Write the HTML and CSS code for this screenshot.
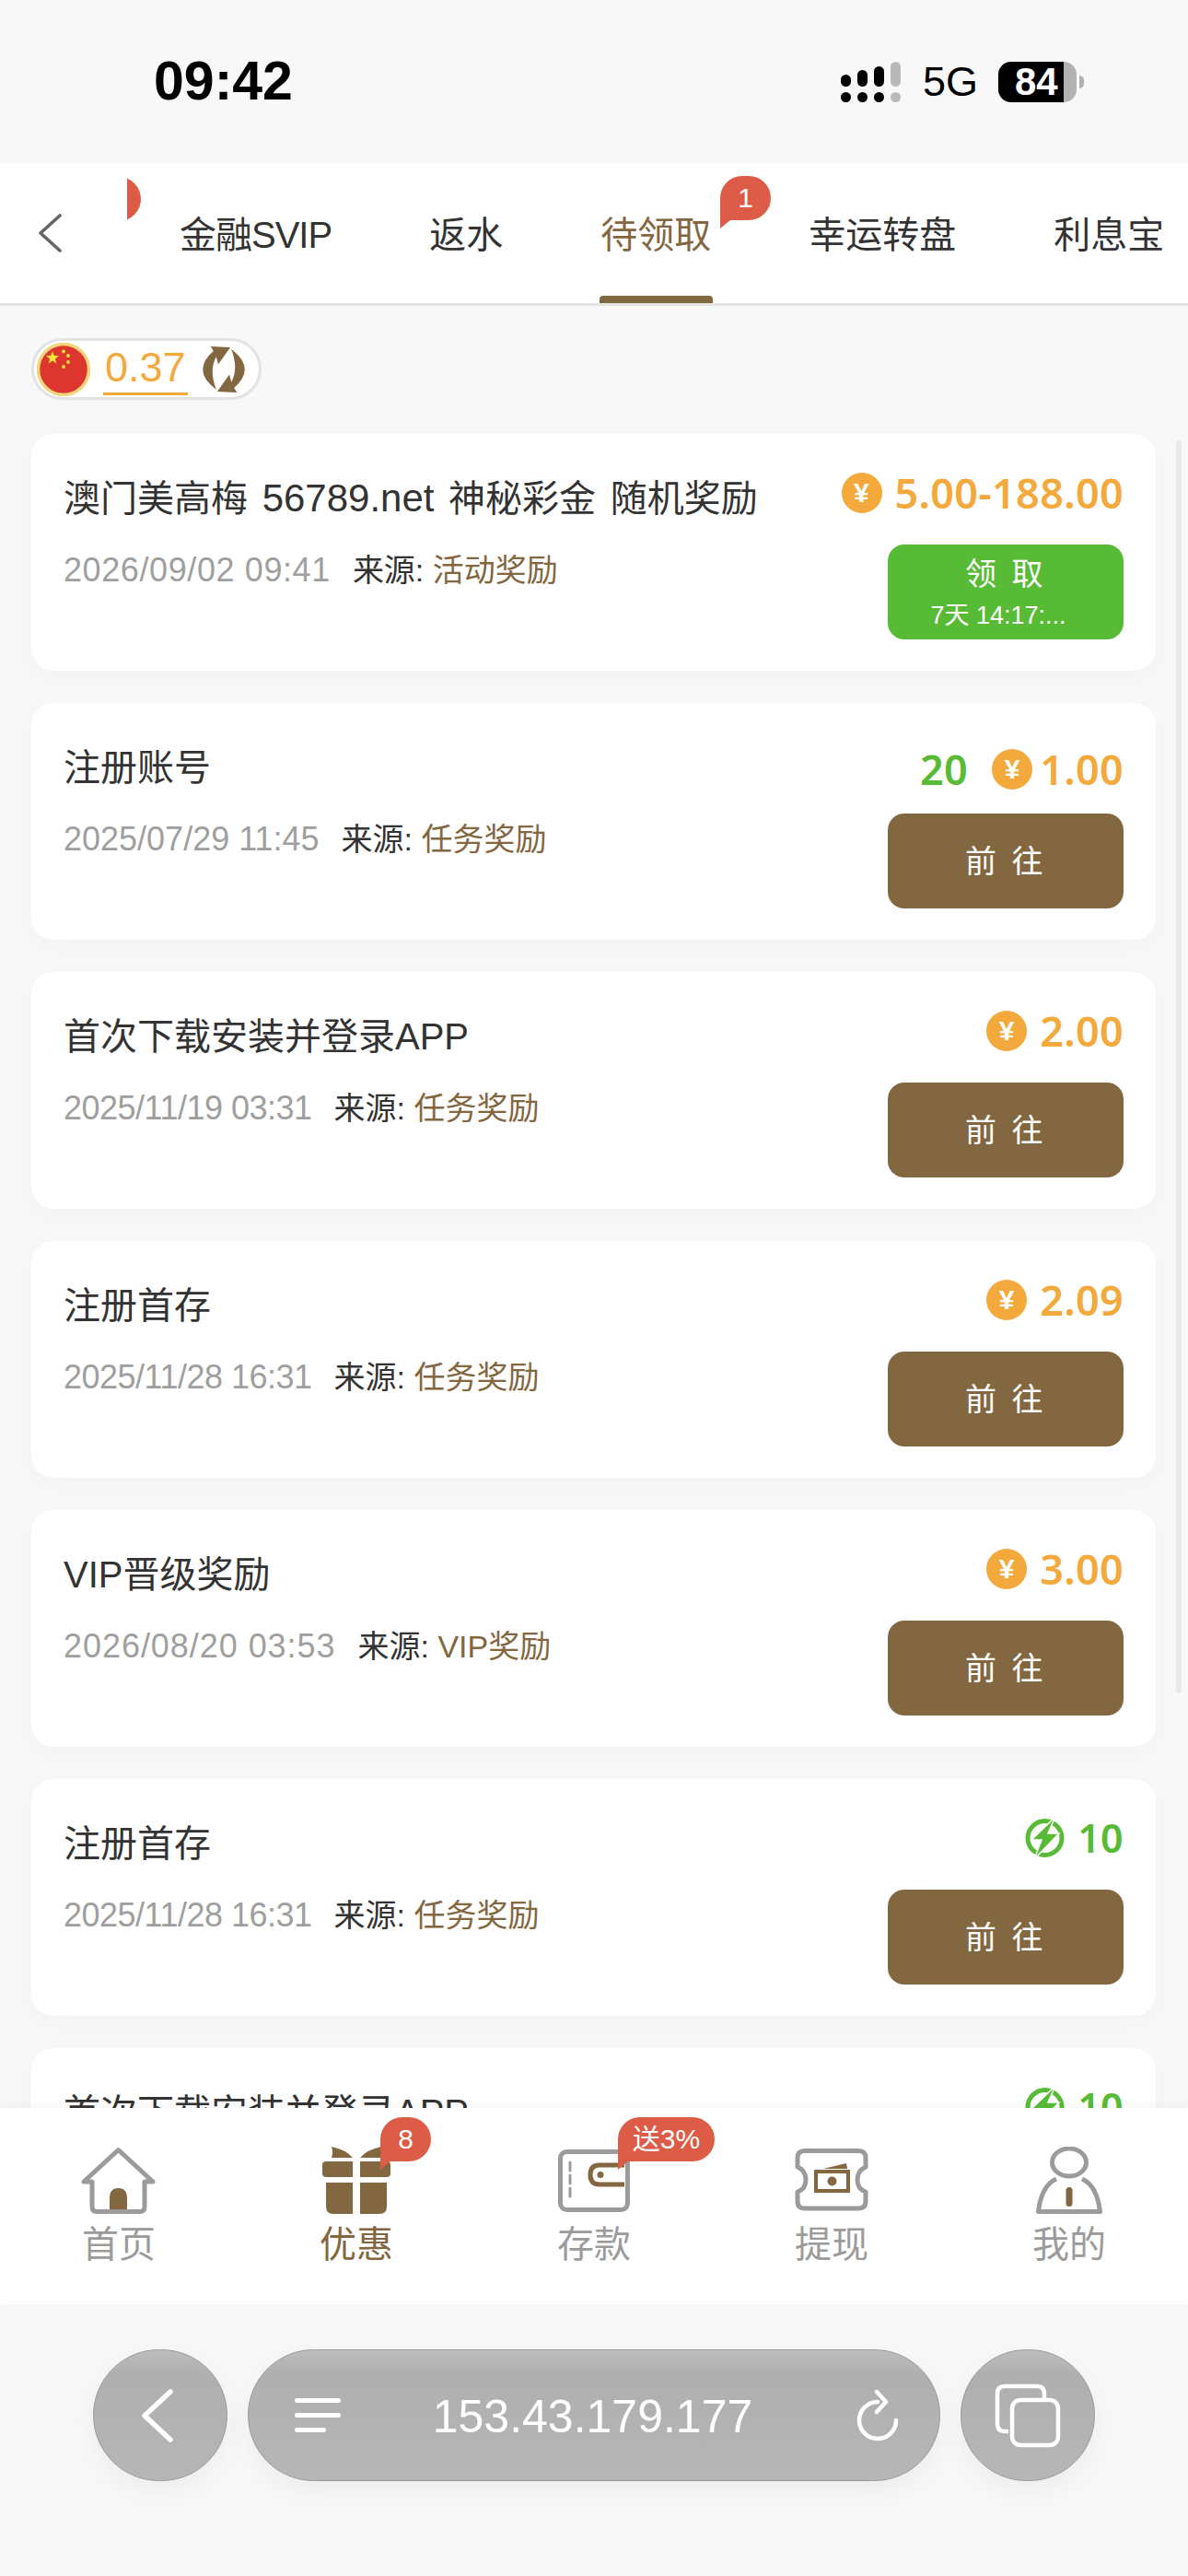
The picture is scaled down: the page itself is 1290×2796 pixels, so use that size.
FILE: index.html
```html
<!DOCTYPE html>
<html lang="zh-CN">
<head>
  <meta charset="UTF-8">
  <meta name="viewport" content="width=device-width, initial-scale=1.0">
  <title>待领取</title>
  <link rel="stylesheet" href="styles.css">
</head>
<body>
  <div class="status-bar">
    <span class="time">09:42</span>
    <div class="status-right">
      <svg class="signal" width="65" height="44" viewBox="0 0 65 44">
        <g fill="#000">
          <rect x="0" y="14" width="11" height="13" rx="5.5"/><rect x="18" y="9" width="11" height="18" rx="5.5"/><rect x="36" y="5" width="11" height="22" rx="5.5"/>
          <rect x="0" y="33" width="11" height="11" rx="5.5"/><rect x="18" y="33" width="11" height="11" rx="5.5"/><rect x="36" y="33" width="11" height="11" rx="5.5"/>
        </g>
        <g fill="#b9b9b9"><rect x="54" y="0" width="11" height="27" rx="5.5"/><rect x="54" y="33" width="11" height="11" rx="5.5"/></g>
      </svg>
      <span class="net">5G</span>
      <div class="battery"><span>84</span></div>
      <i class="battery-nub"></i>
    </div>
  </div>

  <nav class="top-nav">
    <a class="nav-back">
      <svg width="28" height="44" viewBox="0 0 28 44"><path d="M25 3 L4 22 L25 41" fill="none" stroke="#666" stroke-width="3.6" stroke-linejoin="round" stroke-linecap="round"/></svg>
    </a>
    <div class="tabs">
      <div class="tab-cut"><b class="badge"></b></div>
      <a class="tab tab-first">金融SVIP</a>
      <a class="tab">返水</a>
      <a class="tab active">待领取<b class="badge tab-badge">1</b></a>
      <a class="tab">幸运转盘</a>
      <a class="tab">利息宝</a>
    </div>
  </nav>

  <main class="content">
    <div class="wallet-chip">
      <svg class="flag" width="58" height="58" viewBox="0 0 58 58">
        <circle cx="29" cy="29" r="27.5" fill="#dc362e" stroke="#f2d67e" stroke-width="3.5"/>
        <polygon fill="#ffe53b" points="17,9 18.8,14 24,14.2 19.9,17.4 21.3,22.5 17,19.6 12.7,22.5 14.1,17.4 10,14.2 15.2,14"/>
        <g fill="#ffe53b"><circle cx="29" cy="9.5" r="1.9"/><circle cx="34" cy="14" r="1.9"/><circle cx="34" cy="21" r="1.9"/><circle cx="29" cy="26" r="1.9"/></g>
      </svg>
      <span class="chip-value">0.37</span>
      <svg class="chip-refresh" width="50" height="50" viewBox="0 0 48 49">
        <g fill="#826740">
          <path d="M13 5 L10 0 L31 1 L18 19 L16 11 Q8 25 16 46 Q-11 26 13 5 Z"/>
          <path d="M35 44 L38 49 L17 48 L30 30 L32 38 Q40 24 32 3 Q59 23 35 44 Z"/>
        </g>
      </svg>
    </div>

    <div class="card-list">
      <section class="card">
        <div class="card-main">
          <h3>澳门美高梅 <span class="latin">56789.net</span> 神秘彩金 随机奖励</h3>
          <p class="meta"><span class="date date-wide">2026/09/02 09:41</span>来源: <em>活动奖励</em></p>
        </div>
        <div class="card-side">
          <div class="amount"><i class="coin">¥</i><span>5.00-188.00</span></div>
          <button class="btn btn-claim">领 取<small>7天 14:17:...</small></button>
        </div>
      </section>

      <section class="card">
        <div class="card-main">
          <h3>注册账号</h3>
          <p class="meta"><span class="date">2025/07/29 11:45</span>来源: <em>任务奖励</em></p>
        </div>
        <div class="card-side">
          <div class="amount amount-mixed"><span class="green points">20</span><i class="coin">¥</i><span>1.00</span></div>
          <button class="btn">前 往</button>
        </div>
      </section>

      <section class="card">
        <div class="card-main">
          <h3>首次下载安装并登录APP</h3>
          <p class="meta"><span class="date date-tight">2025/11/19 03:31</span>来源: <em>任务奖励</em></p>
        </div>
        <div class="card-side">
          <div class="amount"><i class="coin">¥</i><span>2.00</span></div>
          <button class="btn">前 往</button>
        </div>
      </section>

      <section class="card">
        <div class="card-main">
          <h3>注册首存</h3>
          <p class="meta"><span class="date date-tight">2025/11/28 16:31</span>来源: <em>任务奖励</em></p>
        </div>
        <div class="card-side">
          <div class="amount"><i class="coin">¥</i><span>2.09</span></div>
          <button class="btn">前 往</button>
        </div>
      </section>

      <section class="card">
        <div class="card-main">
          <h3>VIP晋级奖励</h3>
          <p class="meta"><span class="date date-wider">2026/08/20 03:53</span>来源: <em>VIP奖励</em></p>
        </div>
        <div class="card-side">
          <div class="amount"><i class="coin">¥</i><span>3.00</span></div>
          <button class="btn">前 往</button>
        </div>
      </section>

      <section class="card">
        <div class="card-main">
          <h3>注册首存</h3>
          <p class="meta"><span class="date date-tight">2025/11/28 16:31</span>来源: <em>任务奖励</em></p>
        </div>
        <div class="card-side">
          <div class="amount">
            <svg class="bolt" width="44" height="46" viewBox="0 0 44 46"><circle cx="21.5" cy="23" r="18.5" fill="none" stroke="#58bb35" stroke-width="5"/><path d="M33 0 L7 25 H18 L10 46 L37 18 H25 Z" fill="#58bb35" stroke="#fff" stroke-width="1.5"/></svg>
            <span class="green bolt-value">10</span>
          </div>
          <button class="btn">前 往</button>
        </div>
      </section>

      <section class="card">
        <div class="card-main">
          <h3>首次下载安装并登录APP</h3>
          <p class="meta"><span class="date date-tight">2025/11/19 03:31</span>来源: <em>任务奖励</em></p>
        </div>
        <div class="card-side">
          <div class="amount">
            <svg class="bolt" width="44" height="46" viewBox="0 0 44 46"><circle cx="21.5" cy="23" r="18.5" fill="none" stroke="#58bb35" stroke-width="5"/><path d="M33 0 L7 25 H18 L10 46 L37 18 H25 Z" fill="#58bb35" stroke="#fff" stroke-width="1.5"/></svg>
            <span class="green bolt-value">10</span>
          </div>
          <button class="btn">前 往</button>
        </div>
      </section>
    </div>
    <div class="scroll-thumb"></div>
  </main>

  <footer class="tab-bar">
    <a class="bar-item">
      <svg width="82" height="74" viewBox="0 0 82 74">
        <path d="M31 73 V56 Q31 45 40.5 45 Q50 45 50 56 V73 Z" fill="#826740"/>
        <path d="M3 38 L40.5 3.5 L78 38 H69 V65 Q69 70.5 64 70.5 H17 Q12 70.5 12 65 V38 Z" fill="none" stroke="#9b9b9b" stroke-width="5" stroke-linejoin="round"/>
      </svg>
      <span>首页</span>
    </a>
    <a class="bar-item active">
      <svg width="74" height="74" viewBox="0 0 74 74">
        <g fill="#826740">
          <path d="M10 0 Q25 3 33 12 H10 Q12 5 10 0 Z"/><path d="M64 0 Q49 3 41 12 H64 Q62 5 64 0 Z"/>
          <path d="M4 16 H33 V33 H4 Q0 33 0 29 V20 Q0 16 4 16 Z"/><path d="M41 16 H70 Q74 16 74 20 V29 Q74 33 70 33 H41 Z"/>
          <path d="M4 39 H33 V73 H12 Q4 73 4 65 Z"/><path d="M41 39 H70 V65 Q70 73 62 73 H41 Z"/>
        </g>
      </svg>
      <b class="badge bar-badge">8</b>
      <span>优惠</span>
    </a>
    <a class="bar-item">
      <svg width="78" height="74" viewBox="0 -3 78 74">
        <rect x="2.5" y="2.5" width="73" height="63" rx="7" fill="none" stroke="#9b9b9b" stroke-width="5"/>
        <path d="M13 14 V52" stroke="#9b9b9b" stroke-width="3" stroke-dasharray="9 5" stroke-linecap="round"/>
        <path d="M72 17 H45 Q35 17 35 27.5 Q35 38 45 38 H72" fill="none" stroke="#826740" stroke-width="5"/>
        <circle cx="46" cy="27.5" r="3.5" fill="#826740"/>
      </svg>
      <b class="badge bar-badge wide">送3%</b>
      <span>存款</span>
    </a>
    <a class="bar-item">
      <svg width="80" height="74" viewBox="0 -2 80 74">
        <path d="M11 2.5 H69 Q77 2.5 77 10 V20 Q68 24 68 34 Q68 44 77 47 V57 Q77 65 69 65 H11 Q3 65 3 57 V47 Q12 44 12 34 Q12 24 3 20 V10 Q3 2.5 11 2.5 Z" fill="none" stroke="#9b9b9b" stroke-width="5" stroke-linejoin="round"/>
        <path d="M31 22 L56 16 L57 22 Z" fill="#826740"/>
        <rect x="23" y="25" width="35" height="21" fill="#fff" stroke="#826740" stroke-width="4"/>
        <circle cx="40.5" cy="35.5" r="5" fill="#826740"/>
      </svg>
      <span>提现</span>
    </a>
    <a class="bar-item">
      <svg width="72" height="74" viewBox="0 0 72 74">
        <ellipse cx="36" cy="17" rx="18.5" ry="15" fill="none" stroke="#9b9b9b" stroke-width="5"/>
        <path d="M22 35 Q6 42 2.5 70.5 H69.5 Q66 42 50 35" fill="none" stroke="#9b9b9b" stroke-width="5" stroke-linejoin="round"/>
        <rect x="32.5" y="44" width="7" height="21" rx="3.5" fill="#826740"/>
      </svg>
      <span>我的</span>
    </a>
  </footer>

  <div class="browser-bar">
    <a class="round-btn">
      <svg class="back-icon" width="38" height="60" viewBox="0 0 38 60"><path d="M33 4 L5 30 L33 56" fill="none" stroke="#fff" stroke-width="5.5" stroke-linecap="round" stroke-linejoin="round"/></svg>
    </a>
    <div class="address">
      <div class="menu-lines"><i></i><i></i><i></i></div>
      <span class="url">153.43.179.177</span>
      <svg class="reload" width="48" height="56" viewBox="0 0 48 56"><path d="M43 33 A20 20 0 1 1 23 13" fill="none" stroke="#fff" stroke-width="4.5" stroke-linecap="round"/><path d="M22 2 L32 13 L22 24" fill="none" stroke="#fff" stroke-width="4.5" stroke-linecap="round" stroke-linejoin="round"/></svg>
    </div>
    <a class="round-btn">
      <svg width="72" height="70" viewBox="0 0 72 70">
        <path d="M15 52 H11 Q3 52 3 44 V11 Q3 3 11 3 H46 Q54 3 54 11 V17" fill="none" stroke="#fff" stroke-width="4.5"/>
        <rect x="19" y="18" width="50" height="49" rx="9" fill="none" stroke="#fff" stroke-width="4.5"/>
      </svg>
    </a>
  </div>
</body>
</html>
```

FILE: styles.css
```css
* {
  box-sizing: border-box;
}
body {
  margin: 0;
  width: 1290px;
  height: 2796px;
  overflow: hidden;
  display: flex;
  flex-direction: column;
  background-color: #f8f8f8;
  color: #333;
  font-family: "Liberation Sans", "Noto Sans CJK SC", sans-serif;
}

/* status bar */
.status-bar {
  flex: none;
  height: 177px;
  display: flex;
  align-items: center;
  justify-content: space-between;
  padding: 0 113px 0 167px;
}
.time {
  font-size: 59px;
  font-weight: 700;
  color: #000;
  margin-bottom: 2px;
}
.status-right {
  display: flex;
  align-items: center;
}
.signal {
  margin-right: 24px;
}
.net {
  font-size: 45px;
  color: #000;
  margin-right: 22px;
}
.battery {
  width: 85px;
  height: 44px;
  border-radius: 14px;
  background: linear-gradient(90deg, #000 84%, #b2b2b2 84%);
  color: #fff;
  font-size: 42px;
  font-weight: 700;
  line-height: 44px;
  padding-left: 18px;
}
.battery-nub {
  width: 5px;
  height: 14px;
  margin-left: 3px;
  background-color: #b2b2b2;
  border-radius: 0 7px 7px 0;
}

/* top tabs */
.top-nav {
  flex: none;
  height: 155px;
  display: flex;
  background-color: #fff;
  border-bottom: 3px solid #e4e4e4;
}
.nav-back {
  flex: none;
  width: 138px;
  display: flex;
  align-items: center;
  padding-left: 40px;
}
.tabs {
  flex: 1;
  display: flex;
  overflow: hidden;
}
.tab-cut {
  flex: none;
  width: 15px;
  margin-right: -11px;
  height: 100%;
  overflow: hidden;
  position: relative;
}
.tab-cut .badge {
  top: 15px;
  left: -40px;
}
.tab {
  flex: none;
  position: relative;
  display: flex;
  align-items: center;
  padding: 0 53px 2px;
  font-size: 40px;
  color: #333;
}
.tab-first {
  letter-spacing: -1px;
}
.tab.active {
  color: #826740;
}
.tab.active::after {
  content: "";
  position: absolute;
  left: 52px;
  right: 51px;
  bottom: 0;
  height: 8px;
  background-color: #826740;
  border-radius: 4px 4px 0 0;
}

/* speech bubble badge */
.badge {
  position: absolute;
  height: 48px;
  min-width: 55px;
  display: block;
  background-color: #dc5c47;
  border-radius: 24px 24px 24px 0;
  color: #fff;
  font-size: 30px;
  font-weight: 400;
  line-height: 48px;
  text-align: center;
}
.badge::after {
  content: "";
  position: absolute;
  left: 0;
  top: 100%;
  border-left: 11px solid #dc5c47;
  border-bottom: 9px solid transparent;
}
.tab-badge {
  top: 14px;
  left: 183px;
}

/* content */
.content {
  flex: 1;
  position: relative;
  overflow: hidden;
  padding: 35px 35px 0 34px;
}
.wallet-chip {
  width: 250px;
  height: 67px;
  display: flex;
  align-items: center;
  padding-left: 3px;
  background-color: #fff;
  border: 3px solid #e3e3e3;
  border-radius: 34px;
}
.chip-value {
  margin-left: 14px;
  font-size: 45px;
  line-height: 54px;
  color: #f3a93c;
  border-bottom: 3px solid #f3a93c;
  padding: 0 2px;
}
.chip-refresh {
  margin-left: 14px;
}
.card-list {
  display: flex;
  flex-direction: column;
  gap: 35px;
  margin-top: 37px;
}
.card {
  flex: none;
  height: 257px;
  display: flex;
  justify-content: space-between;
  padding: 0 0 0 35px;
  background-color: #fff;
  border-radius: 24px;
  box-shadow: 0 8px 24px rgba(0, 0, 0, 0.025);
}
.card-main {
  padding-top: 45px;
}
.card h3 {
  margin: 0 0 33px;
  font-size: 40px;
  font-weight: 400;
  line-height: 50px;
  color: #333;
  word-spacing: 4.5px;
}
.latin {
  font-size: 42px;
}
.meta {
  margin: 0;
  font-size: 34px;
  line-height: 40px;
  color: #333;
}
.date {
  color: #9f9f9f;
  font-size: 36px;
  margin-right: 24px;
}
.date-tight {
  letter-spacing: -0.5px;
}
.date-wide {
  letter-spacing: 0.6px;
}
.date-wider {
  letter-spacing: 0.95px;
}
.meta em {
  font-style: normal;
  color: #826740;
}
.card-side {
  width: 320px;
  padding: 39px 35px 0 0;
  display: flex;
  flex-direction: column;
  align-items: flex-end;
}
.amount {
  height: 50px;
  margin-bottom: 31px;
  display: flex;
  align-items: center;
  justify-content: flex-end;
  font-family: "Noto Sans", "Liberation Sans", sans-serif;
  font-size: 45px;
  font-weight: 600;
  line-height: 50px;
  letter-spacing: 0.3px;
  color: #f3a93c;
  white-space: nowrap;
}
.amount-mixed {
  margin-top: 8px;
  margin-bottom: 23px;
}
.amount-mixed .coin {
  margin-right: 8px;
}
.green {
  color: #58bb35;
}
.points {
  margin-right: 26px;
}
.coin {
  flex: none;
  width: 44px;
  height: 44px;
  margin-right: 14px;
  border-radius: 50%;
  background-color: #f3a93c;
  color: #fff;
  font-family: "Liberation Sans", sans-serif;
  font-size: 30px;
  font-style: normal;
  font-weight: 700;
  line-height: 44px;
  text-align: center;
}
.bolt {
  margin-right: 13px;
}
.bolt-value {
  font-size: 43px;
}
.btn {
  width: 256px;
  height: 103px;
  border: none;
  border-radius: 18px;
  background-color: #826740;
  color: #fff;
  font-family: "Liberation Sans", "Noto Sans CJK SC", sans-serif;
  font-size: 34px;
  letter-spacing: 3.5px;
  padding: 0 0 5px;
}
.btn-claim {
  background-color: #58bb35;
  line-height: 40px;
  padding: 2px 0 0;
}
.btn small {
  display: block;
  font-size: 27px;
  line-height: 34px;
  letter-spacing: 0;
  margin-top: 8px;
  padding-right: 16px;
}
.scroll-thumb {
  position: absolute;
  top: 146px;
  right: 7px;
  width: 6px;
  height: 1360px;
  border-radius: 3px;
  background-color: #e9e9e9;
}

/* bottom tab bar */
.tab-bar {
  flex: none;
  height: 213px;
  display: grid;
  grid-template-columns: repeat(5, 1fr);
  background-color: #fff;
  position: relative;
  box-shadow: 0 -4px 10px rgba(0, 0, 0, 0.03);
}
.bar-item {
  position: relative;
  display: flex;
  flex-direction: column;
  align-items: center;
  padding-top: 42px;
  color: #9b9b9b;
  font-size: 40px;
}
.bar-item svg {
  display: block;
}
.bar-item.active {
  color: #826740;
}
.bar-item span {
  line-height: 46px;
  margin-top: 9px;
}
.bar-badge {
  top: 10px;
  left: 155px;
}
.bar-badge.wide {
  min-width: 105px;
  left: 155px;
  font-size: 30px;
}

/* browser bar */
.browser-bar {
  flex: none;
  height: 295px;
  display: flex;
  gap: 22px;
  padding: 49px 0 0 101px;
}
.round-btn,
.address {
  height: 143px;
  background: linear-gradient(180deg, #bdbdbd 0, #afafaf 18%, #b6b6b6 100%);
  border: 1px solid #9a9a9a;
  border-radius: 72px;
  box-shadow: 0 10px 30px rgba(0, 0, 0, 0.05);
}
.round-btn {
  width: 146px;
  display: flex;
  align-items: center;
  justify-content: center;
}
.back-icon {
  margin-right: 6px;
}
.address {
  width: 752px;
  display: grid;
  grid-template-columns: 1fr auto 1fr;
  align-items: center;
  padding: 0 42px 0 50px;
}
.menu-lines {
  display: flex;
  flex-direction: column;
  gap: 11px;
}
.menu-lines i {
  display: block;
  width: 50px;
  height: 5px;
  border-radius: 3px;
  background-color: #fff;
}
.menu-lines i:last-child {
  width: 34px;
}
.url {
  font-size: 50px;
  color: #fff;
  margin: 3px 11px 0 0;
}
.reload {
  justify-self: end;
}
```
